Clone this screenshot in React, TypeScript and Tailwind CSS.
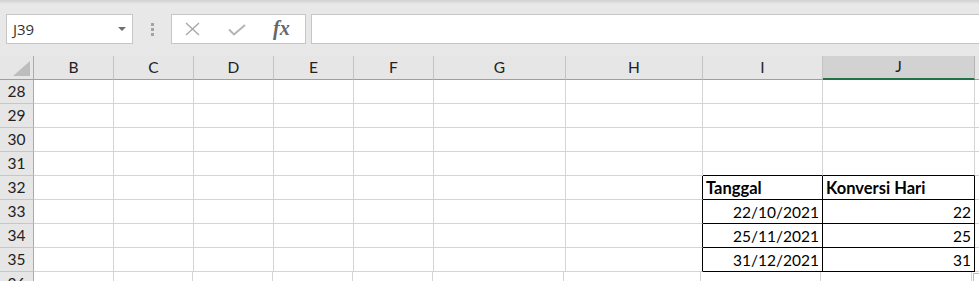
import React from 'react';

const cols = [
    { id: 'B', w: 'w-[80px]' },
    { id: 'C', w: 'w-[80px]' },
    { id: 'D', w: 'w-[80px]' },
    { id: 'E', w: 'w-[80px]' },
    { id: 'F', w: 'w-[80px]' },
    { id: 'G', w: 'w-[132px]' },
    { id: 'H', w: 'w-[137px]' },
    { id: 'I', w: 'w-[120px]' },
    { id: 'J', w: 'w-[152px]' },
];

const rows = [28, 29, 30, 31, 32, 33, 34, 35, 36];

// cell values for the little date table
const values: Record<string, { text: string; bold?: boolean; right?: boolean }> = {
    I32: { text: 'Tanggal', bold: true },
    J32: { text: 'Konversi Hari', bold: true },
    I33: { text: '22/10/2021', right: true },
    J33: { text: '22', right: true },
    I34: { text: '25/11/2021', right: true },
    J34: { text: '25', right: true },
    I35: { text: '31/12/2021', right: true },
    J35: { text: '31', right: true },
};

const inTable = (col: string, row: number) => (col === 'I' || col === 'J') && row >= 32 && row <= 35;

const cellBorders = (col: string, row: number) => {
    const right = inTable(col, row) || (col === 'H' && row >= 32 && row <= 35) ? 'border-r-black' : 'border-r-[#d4d4d4]';
    const bottom = inTable(col, row) || ((col === 'I' || col === 'J') && row === 31) ? 'border-b-black' : 'border-b-[#d4d4d4]';
    return `${right} ${bottom}`;
};

const Toolbar: React.FC = () => (
    <div className="h-[56px] bg-[#e8e8e8] flex flex-col">
        <div className="h-[4px] bg-gradient-to-b from-[#d0d0d0] to-[#e8e8e8]" />
        <div className="flex items-start pt-[10px]">
            {/* Name box */}
            <div className="ml-[6px] w-[127px] h-[30px] bg-white border border-[#c6c6c6] flex items-center justify-between pl-[6px] pr-[6px]">
                <span className="text-[15px] text-[#333] font-['Open_Sans',sans-serif]">J39</span>
                <svg width="8" height="4" viewBox="0 0 8 4">
                    <polygon points="0,0 8,0 4,4" fill="#707070" />
                </svg>
            </div>

            {/* grip dots */}
            <div className="w-[38px] h-[30px] flex flex-col items-center justify-center gap-[2px] pl-[1px]">
                <div className="w-[3px] h-[3px] bg-[#a3a3a3]" />
                <div className="w-[3px] h-[3px] bg-[#a3a3a3]" />
                <div className="w-[3px] h-[3px] bg-[#a3a3a3]" />
            </div>

            {/* cancel / enter / fx */}
            <div className="w-[135px] h-[30px] bg-white border border-[#c6c6c6] flex items-center pl-[13px]">
                <svg width="15" height="14" viewBox="0 0 15 14">
                    <path d="M1 1 L14 13 M14 1 L1 13" stroke="#a8a8a8" strokeWidth="1.4" fill="none" />
                </svg>
                <svg width="18" height="12" viewBox="0 0 18 12" className="ml-[28px] mt-[2px]">
                    <path d="M1 5.5 L6 10.5 L17 1" stroke="#b4b4b4" strokeWidth="2" fill="none" />
                </svg>
                <span className="ml-[27px] text-[20px] leading-none italic font-semibold text-[#666] font-['Liberation_Serif',serif] -mt-[2px]">
                    fx
                </span>
            </div>

            {/* formula bar */}
            <div className="ml-[5px] flex-1 h-[30px] bg-white border border-r-0 border-[#c6c6c6]" />
        </div>
    </div>
);

const ColumnHeaders: React.FC = () => (
    <div className="flex h-[24px]">
        <div className="w-[34px] h-[24px] bg-[#e6e6e6] border-r border-b border-r-[#ababab] border-b-[#9e9e9e] relative">
            <svg width="18" height="16" viewBox="0 0 18 16" className="absolute left-[13px] top-[5px]">
                <polygon points="17,0 17,15 0,15" fill="#bdbdbd" />
            </svg>
        </div>
        {cols.map((c) =>
            c.id === 'J' ? (
                <div
                    key={c.id}
                    className={`${c.w} h-[24px] bg-[#d2d2d2] border-r border-r-[#b5b5b5] border-b-2 border-b-[#217346] flex items-center justify-center text-[#222]`}
                >
                    {c.id}
                </div>
            ) : (
                <div
                    key={c.id}
                    className={`${c.w} h-[24px] bg-[#e6e6e6] border-r border-b border-r-[#c4c4c4] border-b-[#9e9e9e] flex items-center justify-center text-[#222]`}
                >
                    {c.id}
                </div>
            )
        )}
        <div className="flex-1 h-[24px] bg-[#e6e6e6] border-b border-b-[#9e9e9e]" />
    </div>
);

const App: React.FC = () => {
    return (
        <div className="w-[979px] h-[281px] overflow-hidden bg-white font-['Lato',sans-serif] text-[15.5px] text-black">
            <Toolbar />
            <ColumnHeaders />

            {rows.map((r) => (
                <div key={r} className="flex h-[24px]">
                    <div className="w-[34px] h-[24px] bg-[#e6e6e6] border-r border-b border-r-[#ababab] border-b-[#c6c6c6] flex items-center justify-center text-[#222]">
                        {r}
                    </div>
                    {cols.map((c) => {
                        const v = values[`${c.id}${r}`];
                        return (
                            <div
                                key={c.id}
                                className={`${c.w} h-[24px] border-r border-b ${cellBorders(c.id, r)} flex items-end pb-[2px] px-[3px] ${v?.right ? 'justify-end' : 'justify-start'}`}
                            >
                                {v && (
                                    <span
                                        className={`leading-[18px] whitespace-nowrap ${v.bold ? 'font-bold text-[16.5px]' : ''}`}
                                    >
                                        {v.text}
                                    </span>
                                )}
                            </div>
                        );
                    })}
                    <div className="flex-1 h-[24px] border-b border-b-[#d4d4d4]">
                        {r === 36 && <div className="mt-[1px] ml-[1px] w-[6px] h-[8px] border-l border-t border-[#c0c0c0]" />}
                    </div>
                </div>
            ))}
        </div>
    );
};

export default App;
